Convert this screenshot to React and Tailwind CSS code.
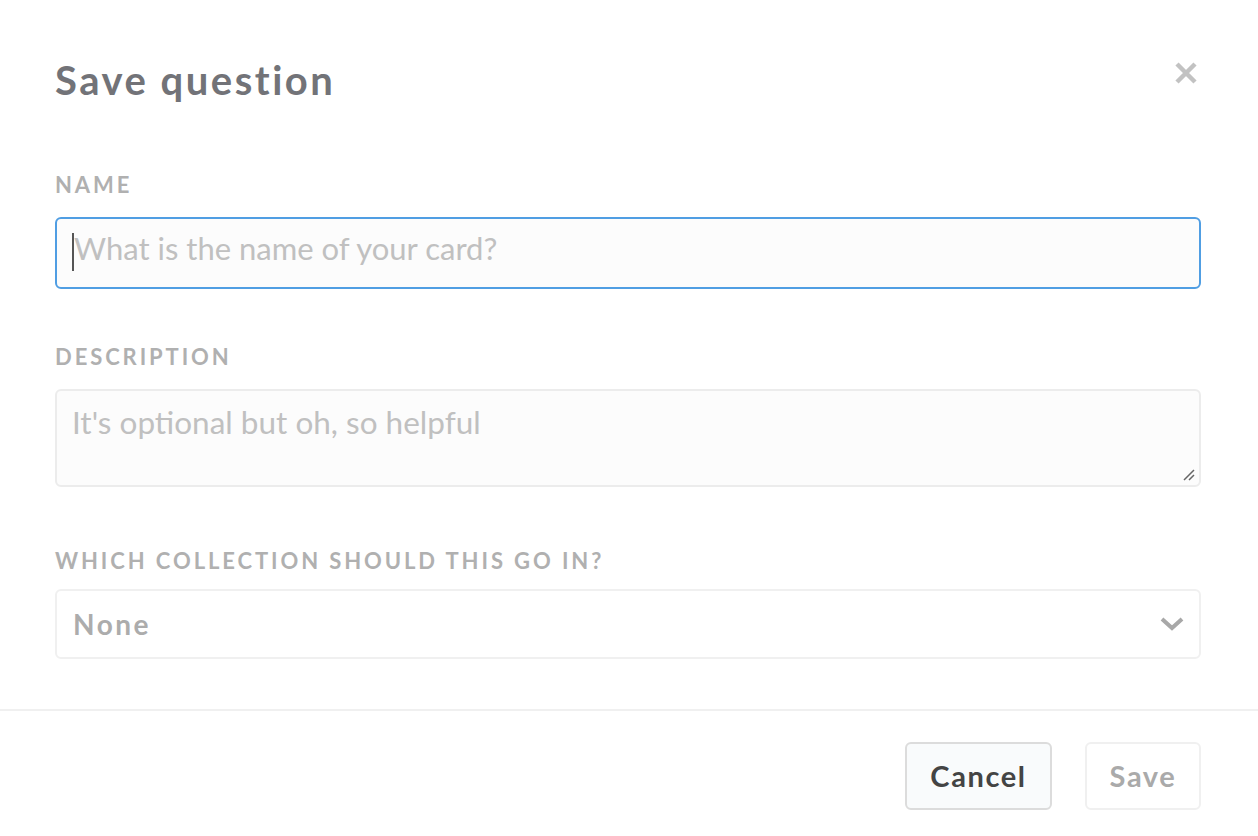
export default function App() {
  return (
    <div className="w-[1258px] h-[836px] bg-white overflow-hidden" style={{ fontFamily: 'Lato, "Open Sans", sans-serif' }}>
      <div className="pl-[55px] pt-[52px] pr-[57px]">
        <div className="flex items-start justify-between">
          <h2 className="text-[40px] leading-[56px] text-[#727378] font-bold tracking-[2.5px]">Save question</h2>
          <svg className="mt-[9px] mr-[3px]" width="24" height="24" viewBox="0 0 24 24">
            <path d="M3 3 L21 21 M21 3 L3 21" stroke="#c2c2c2" strokeWidth="4.5" strokeLinecap="butt" />
          </svg>
        </div>
        <div className="mt-[66px]">
          <label className="block text-[22px] leading-[22px] font-bold tracking-[2.9px] text-[#b0b0b0]">NAME</label>
          <div className="mt-[21px] h-[72px] rounded-[6px] border-2 border-[#509ee3] bg-[#fcfcfc] flex items-start pt-[14px] pl-[15px]">
            <span className="w-[2px] h-[38px] bg-[#555]"></span>
            <span className="text-[31px] leading-[38px] -mt-[4px] text-[#c0c0c0]">What is the name of your card?</span>
          </div>
        </div>
        <div className="mt-[57px]">
          <label className="block text-[22px] leading-[22px] font-bold tracking-[2.9px] text-[#b0b0b0]">DESCRIPTION</label>
          <div className="relative mt-[21px] h-[98px] rounded-[6px] border-2 border-[#ececec] bg-[#fcfcfc] pl-[15px] pt-[12px]">
            <span className="text-[31.5px] leading-[38px] text-[#c0c0c0]">It's optional but oh, so helpful</span>
            <svg className="absolute right-[3px] bottom-[3px]" width="14" height="14" viewBox="0 0 14 14">
              <path d="M2 12 L12 2 M7 12 L12 7" stroke="#666" strokeWidth="1.5" />
            </svg>
          </div>
        </div>
        <div className="mt-[63px]">
          <label className="block text-[22px] leading-[22px] font-bold tracking-[2.9px] text-[#b0b0b0]">WHICH COLLECTION SHOULD THIS GO IN?</label>
          <div className="mt-[17px] h-[70px] rounded-[6px] border-2 border-[#f0f0f0] bg-white flex items-center justify-between pl-[16px] pr-[15px]">
            <span className="text-[28px] font-bold tracking-[2.5px] text-[#acacac]">None</span>
            <svg width="24" height="16" viewBox="0 0 24 16">
              <path d="M2 3 L12 12 L22 3" fill="none" stroke="#a8a8a8" strokeWidth="4" />
            </svg>
          </div>
        </div>
      </div>
      <div className="mt-[50px] border-t-2 border-[#f0f0f0]"></div>
      <div className="flex justify-end gap-[33px] pr-[57px] pt-[31px]">
        <button className="w-[147px] h-[68px] rounded-[6px] border-2 border-[#dcdcdc] bg-[#f9fbfc] text-[29px] font-bold tracking-[1.6px] text-[#444]">Cancel</button>
        <button className="w-[116px] h-[68px] rounded-[6px] border-2 border-[#f0f0f0] bg-white text-[29px] font-bold tracking-[1.6px] text-[#aaa]">Save</button>
      </div>
    </div>
  );
}
